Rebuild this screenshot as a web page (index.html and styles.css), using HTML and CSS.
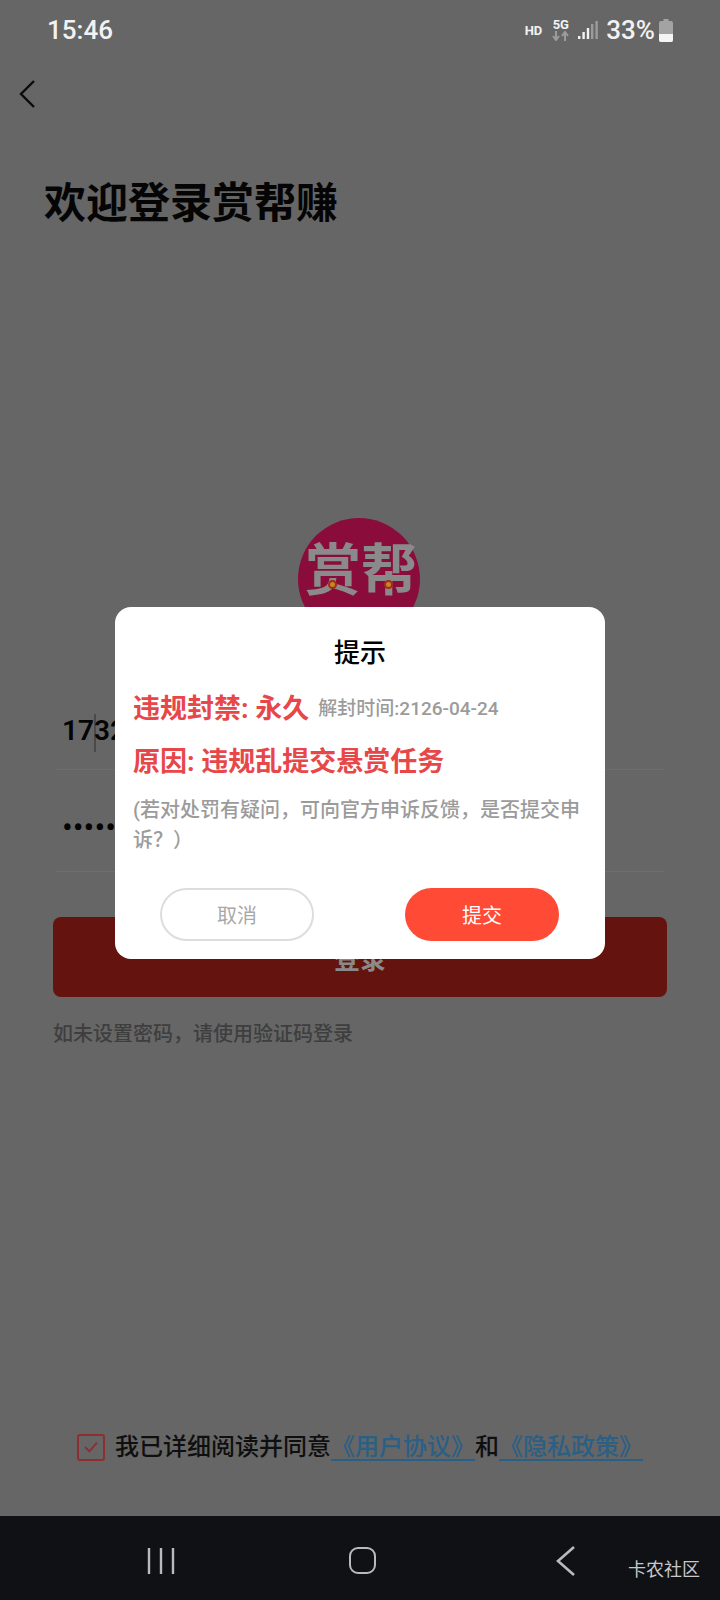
FILE: index.html
```html
<!DOCTYPE html>
<html lang="zh-CN">
<head>
    <meta charset="UTF-8">
    <meta name="viewport" content="width=device-width, initial-scale=1.0">
    <title>欢迎登录赏帮赚</title>
    <link rel="stylesheet" href="styles.css">
</head>
<body>
    <div class="phone">
        <div class="status-bar">
            <span class="clock">15:46</span>
            <div class="status-icons">
                <span class="hd">HD</span>
                <div class="network">
                    <span class="network-label">5G</span>
                    <svg width="17" height="10" viewBox="0 0 17 10" fill="none" stroke="#9c9c9c" stroke-width="2">
                        <path d="M4 0v8M1 5l3 4 3-4"/>
                        <path d="M13 10V2M10 5l3-4 3 4"/>
                    </svg>
                </div>
                <svg class="signal" width="20" height="20" viewBox="0 0 20 20">
                    <rect x="0" y="16" width="2.4" height="3" fill="#f2f2f2"/>
                    <rect x="4.4" y="12" width="2.4" height="7" fill="#f2f2f2"/>
                    <rect x="8.8" y="8" width="2.4" height="11" fill="#f2f2f2"/>
                    <rect x="13" y="4" width="2.4" height="15" fill="#9c9c9c"/>
                    <rect x="17.4" y="1" width="2.4" height="18" fill="#9c9c9c"/>
                </svg>
                <span class="percent">33%</span>
                <svg class="battery" width="14" height="23" viewBox="0 0 14 23">
                    <path d="M4.5 0h5v2h2.5a2 2 0 0 1 2 2v17a2 2 0 0 1-2 2H2a2 2 0 0 1-2-2V4a2 2 0 0 1 2-2h2.5z" fill="#a3a3a3"/>
                    <path d="M0 15h14v6a2 2 0 0 1-2 2H2a2 2 0 0 1-2-2z" fill="#f5f5f5"/>
                </svg>
            </div>
        </div>

        <div class="toolbar">
            <svg width="18" height="30" viewBox="0 0 18 30" fill="none" stroke="#0a0a0a" stroke-width="2.4">
                <path d="M16 2L3 15l13 13"/>
            </svg>
        </div>

        <h1>欢迎登录赏帮赚</h1>

        <div class="logo">
            <span class="logo-text">赏帮</span>
            <i class="logo-dot logo-dot-left"></i>
            <i class="logo-dot logo-dot-right"></i>
        </div>

        <div class="field field-phone">
            <span class="field-value">17<i class="caret"></i>32</span>
        </div>
        <div class="field field-password">
            <span class="field-dots">•••••••</span>
        </div>

        <div class="login-btn">登录</div>
        <p class="hint">如未设置密码，请使用验证码登录</p>

        <div class="agreement">
            <span class="checkbox">
                <svg width="16" height="12" viewBox="0 0 18 14" fill="none" stroke="#8c2f31" stroke-width="2.2">
                    <path d="M2 7l5 5 9-10"/>
                </svg>
            </span>
            <span>我已详细阅读并同意</span><a class="link">《用户协议》</a><span>和</span><a class="link">《隐私政策》</a>
        </div>

        <div class="nav-bar">
            <svg class="nav-recent" width="28" height="28" viewBox="0 0 28 28" stroke="#b8babd" stroke-width="2.4">
                <path d="M2 1v26M14 1v26M26 1v26"/>
            </svg>
            <span class="nav-home"></span>
            <svg class="nav-back" width="20" height="30" viewBox="0 0 20 30" fill="none" stroke="#b8babd" stroke-width="2.6">
                <path d="M18 1L2 15l16 14"/>
            </svg>
            <span class="watermark">卡农社区</span>
        </div>

        <div class="dialog">
            <div class="dialog-title">提示</div>
            <div class="ban-line">
                <span class="ban-text">违规封禁: 永久</span>
                <span class="ban-date">解封时间:2126-04-24</span>
            </div>
            <div class="ban-text ban-reason">原因: 违规乱提交悬赏任务</div>
            <p class="dialog-note">(若对处罚有疑问，可向官方申诉反馈，是否提交申诉？）</p>
            <div class="dialog-actions">
                <button class="btn btn-cancel">取消</button>
                <button class="btn btn-submit">提交</button>
            </div>
        </div>
    </div>
</body>
</html>
```

FILE: styles.css
```css
* {
    box-sizing: border-box;
}
body {
    margin: 0;
    font-family: Roboto, "Noto Sans CJK SC", sans-serif;
    background-color: #666;
}
.phone {
    position: relative;
    display: flex;
    flex-direction: column;
    width: 720px;
    height: 1600px;
    overflow: hidden;
    background-color: #666;
}

/* status bar */
.status-bar {
    display: flex;
    justify-content: space-between;
    align-items: center;
    height: 60px;
    padding: 0 47px 0 47px;
    color: #f2f2f2;
}
.clock {
    font-size: 26px;
    font-weight: 500;
}
.status-icons {
    display: flex;
    align-items: center;
}
.hd {
    margin-right: 10px;
    font-size: 13px;
    font-weight: 700;
}
.network {
    display: flex;
    flex-direction: column;
    align-items: center;
    margin-right: 9px;
}
.network-label {
    font-size: 13px;
    font-weight: 700;
    line-height: 12px;
}
.signal {
    margin-right: 8px;
}
.percent {
    margin-right: 4px;
    font-size: 26px;
    font-weight: 500;
}

.toolbar {
    display: flex;
    align-items: center;
    height: 68px;
    padding-left: 18px;
}
h1 {
    margin: 51px 0 0 44px;
    font-size: 42px;
    font-weight: 700;
    line-height: 50px;
    color: #050505;
}

/* logo behind the dialog */
.logo {
    position: relative;
    align-self: center;
    display: flex;
    justify-content: center;
    align-items: center;
    width: 122px;
    height: 122px;
    margin: 289px 0 0 -2px;
    padding: 0 0 28px 4px;
    border-radius: 50%;
    background-color: #8a0c3a;
}
.logo-text {
    font-size: 56px;
    font-weight: 700;
    white-space: nowrap;
    color: #8a8a8a;
}
.logo-dot {
    position: absolute;
    top: 62px;
    width: 9px;
    height: 9px;
    border: 2px solid #a32a1e;
    border-radius: 50%;
    background-color: #c48a1c;
}
.logo-dot-left {
    left: 30px;
}
.logo-dot-right {
    left: 86px;
}

/* login form */
.field {
    display: flex;
    align-items: flex-end;
    height: 102px;
    margin: 0 55px;
    border-bottom: 1px solid #6e6e6e;
}
.field-phone {
    margin-top: 28px;
    padding: 0 0 21px 7px;
}
.field-password {
    padding: 0 0 29px 7px;
}
.field-value {
    font-size: 28px;
    font-weight: 600;
    line-height: 30px;
    color: #050505;
}
.caret {
    display: inline-block;
    width: 2px;
    height: 38px;
    margin: -4px -2px -4px 0;
    vertical-align: middle;
    background-color: #4a4a4a;
}
.field-dots {
    font-size: 32px;
    line-height: 30px;
    color: #050505;
}
.login-btn {
    display: flex;
    justify-content: center;
    align-items: center;
    height: 80px;
    margin: 45px 53px 0;
    border-radius: 8px;
    font-size: 26px;
    font-weight: 700;
    color: #8a8a8a;
    background-color: #65130e;
}
.hint {
    margin: 23px 0 0 53px;
    font-size: 20px;
    font-weight: 500;
    line-height: 28px;
    color: #3e3e3e;
}

/* agreement row */
.agreement {
    display: flex;
    justify-content: center;
    align-items: center;
    margin-top: auto;
    margin-bottom: 54px;
    font-size: 24px;
    font-weight: 500;
    line-height: 30px;
    color: #0f0f0f;
}
.checkbox {
    display: flex;
    justify-content: center;
    align-items: center;
    width: 28px;
    height: 27px;
    margin-right: 10px;
    border: 2px solid #8c2f31;
    border-radius: 3px;
}
.link {
    color: #2a5f86;
    text-decoration: underline;
    text-underline-offset: 4px;
}

/* system navigation */
.nav-bar {
    position: relative;
    display: flex;
    align-items: center;
    height: 84px;
    padding-top: 5px;
    background-color: #0f1115;
}
.nav-recent {
    margin-left: 147px;
}
.nav-home {
    width: 27px;
    height: 27px;
    margin-left: 174px;
    border: 2.5px solid #b8babd;
    border-radius: 9px;
}
.nav-back {
    margin-left: 180px;
}
.watermark {
    position: absolute;
    left: 628px;
    top: 40px;
    font-size: 18px;
    line-height: 28px;
    color: #c8c8c8;
}

/* dialog */
.dialog {
    position: absolute;
    left: 115px;
    top: 607px;
    width: 490px;
    height: 352px;
    padding: 30px 18px 0;
    border-radius: 16px;
    background-color: #fff;
}
.dialog-title {
    font-size: 26px;
    font-weight: 500;
    line-height: 32px;
    text-align: center;
    color: #000;
}
.ban-line {
    display: flex;
    align-items: center;
    margin-top: 22px;
}
.ban-text {
    font-size: 27px;
    font-weight: 700;
    line-height: 36px;
    color: #e8474a;
}
.ban-date {
    margin: 0 0 6px 9px;
    font-size: 19px;
    font-weight: 500;
    color: #9b9b9b;
}
.ban-reason {
    margin-top: 17px;
}
.dialog-note {
    margin: 15px 0 0;
    font-size: 20px;
    font-weight: 500;
    line-height: 30px;
    color: #9b9b9b;
}
.dialog-actions {
    display: flex;
    justify-content: space-between;
    margin: 33px 28px 0 27px;
}
.btn {
    width: 154px;
    height: 53px;
    padding: 0;
    border-radius: 27px;
    font-family: inherit;
    font-size: 20px;
}
.btn-cancel {
    border: 2px solid #ddd;
    color: #a8a8a8;
    background-color: #fff;
}
.btn-submit {
    border: none;
    color: #fff;
    background-color: #ff4a35;
}
```
